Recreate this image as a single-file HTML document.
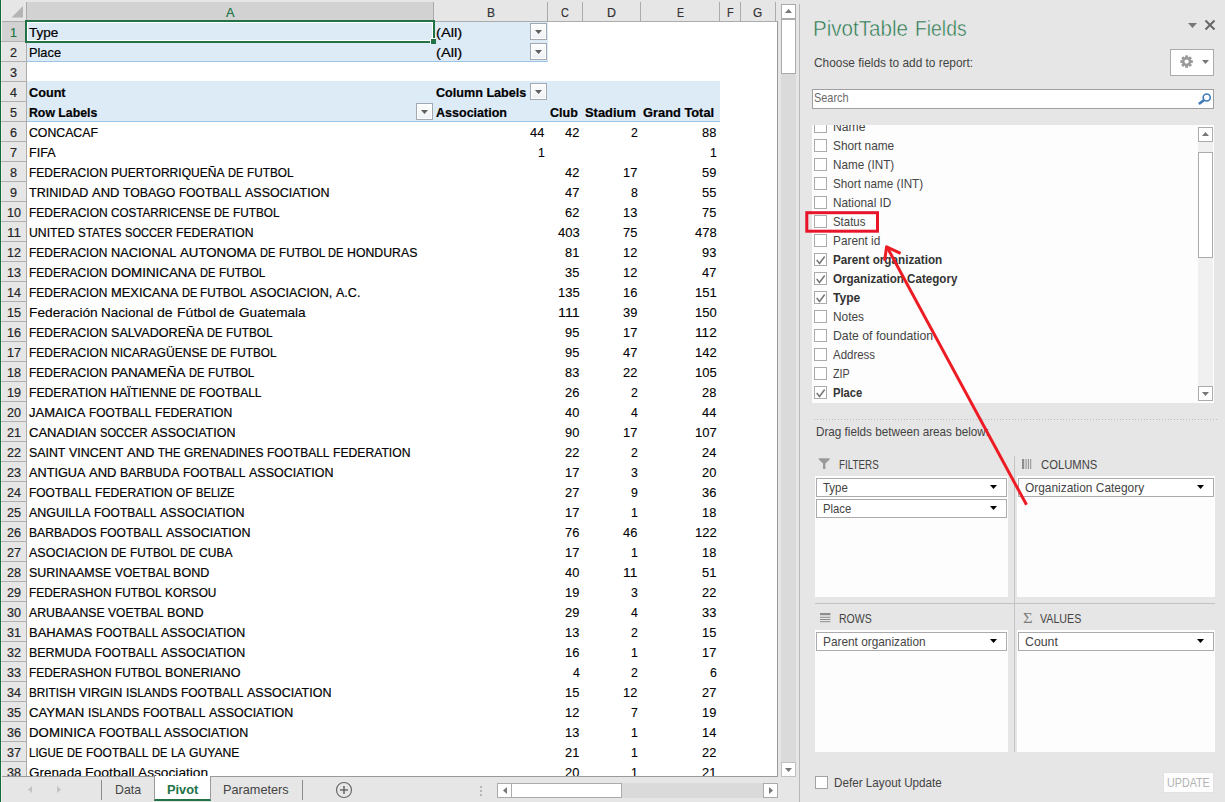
<!DOCTYPE html><html><head><meta charset="utf-8"><title>PivotTable Fields</title><style>
html,body{margin:0;padding:0}body{width:1226px;height:802px;overflow:hidden;position:relative;background:#e6e6e6;font-family:'Liberation Sans', sans-serif}
#root{position:absolute;left:0;top:0;width:1226px;height:802px;overflow:hidden}
#root div,#root svg,#root span{position:absolute;display:block}
.t{white-space:nowrap;transform-origin:0 0}
#sheet .t{-webkit-text-stroke:0.2px currentColor}
#sheet,#flist{overflow:hidden}
</style></head><body><div id="root">
<div style="left:0px;top:0px;width:1px;height:802px;background:#0f6c3b;"></div>
<div style="left:1px;top:0px;width:1px;height:802px;background:#f4eef0;"></div>
<div style="left:27px;top:2px;width:407px;height:19px;background:#d2d2d2;"></div>
<div style="left:26px;top:2px;width:1px;height:19px;background:#ababab;"></div>
<div style="left:433px;top:2px;width:1px;height:19px;background:#ababab;"></div>
<div style="left:547px;top:2px;width:1px;height:19px;background:#ababab;"></div>
<div style="left:582px;top:2px;width:1px;height:19px;background:#ababab;"></div>
<div style="left:640px;top:2px;width:1px;height:19px;background:#ababab;"></div>
<div style="left:719px;top:2px;width:1px;height:19px;background:#ababab;"></div>
<div style="left:740px;top:2px;width:1px;height:19px;background:#ababab;"></div>
<div style="left:775px;top:2px;width:1px;height:19px;background:#ababab;"></div>
<div style="left:2px;top:21px;width:776px;height:1px;background:#ababab;"></div>
<svg style="left:10px;top:5px" width="14" height="13" viewBox="0 0 14 13"><path d="M13 1V12.5H1.5Z" fill="#b4b4b4"/></svg>
<div style="left:2px;top:22px;width:24px;height:20px;background:#d2d2d2;"></div>
<div style="left:26px;top:22px;width:1px;height:754px;background:#ababab;"></div>
<div style="left:1px;top:41px;width:25px;height:1px;background:#b0b0b0;"></div>
<div style="left:1px;top:61px;width:25px;height:1px;background:#b0b0b0;"></div>
<div style="left:1px;top:81px;width:25px;height:1px;background:#b0b0b0;"></div>
<div style="left:1px;top:101px;width:25px;height:1px;background:#b0b0b0;"></div>
<div style="left:1px;top:121px;width:25px;height:1px;background:#b0b0b0;"></div>
<div style="left:1px;top:141px;width:25px;height:1px;background:#b0b0b0;"></div>
<div style="left:1px;top:161px;width:25px;height:1px;background:#b0b0b0;"></div>
<div style="left:1px;top:181px;width:25px;height:1px;background:#b0b0b0;"></div>
<div style="left:1px;top:201px;width:25px;height:1px;background:#b0b0b0;"></div>
<div style="left:1px;top:221px;width:25px;height:1px;background:#b0b0b0;"></div>
<div style="left:1px;top:241px;width:25px;height:1px;background:#b0b0b0;"></div>
<div style="left:1px;top:261px;width:25px;height:1px;background:#b0b0b0;"></div>
<div style="left:1px;top:281px;width:25px;height:1px;background:#b0b0b0;"></div>
<div style="left:1px;top:301px;width:25px;height:1px;background:#b0b0b0;"></div>
<div style="left:1px;top:321px;width:25px;height:1px;background:#b0b0b0;"></div>
<div style="left:1px;top:341px;width:25px;height:1px;background:#b0b0b0;"></div>
<div style="left:1px;top:361px;width:25px;height:1px;background:#b0b0b0;"></div>
<div style="left:1px;top:381px;width:25px;height:1px;background:#b0b0b0;"></div>
<div style="left:1px;top:401px;width:25px;height:1px;background:#b0b0b0;"></div>
<div style="left:1px;top:421px;width:25px;height:1px;background:#b0b0b0;"></div>
<div style="left:1px;top:441px;width:25px;height:1px;background:#b0b0b0;"></div>
<div style="left:1px;top:461px;width:25px;height:1px;background:#b0b0b0;"></div>
<div style="left:1px;top:481px;width:25px;height:1px;background:#b0b0b0;"></div>
<div style="left:1px;top:501px;width:25px;height:1px;background:#b0b0b0;"></div>
<div style="left:1px;top:521px;width:25px;height:1px;background:#b0b0b0;"></div>
<div style="left:1px;top:541px;width:25px;height:1px;background:#b0b0b0;"></div>
<div style="left:1px;top:561px;width:25px;height:1px;background:#b0b0b0;"></div>
<div style="left:1px;top:581px;width:25px;height:1px;background:#b0b0b0;"></div>
<div style="left:1px;top:601px;width:25px;height:1px;background:#b0b0b0;"></div>
<div style="left:1px;top:621px;width:25px;height:1px;background:#b0b0b0;"></div>
<div style="left:1px;top:641px;width:25px;height:1px;background:#b0b0b0;"></div>
<div style="left:1px;top:661px;width:25px;height:1px;background:#b0b0b0;"></div>
<div style="left:1px;top:681px;width:25px;height:1px;background:#b0b0b0;"></div>
<div style="left:1px;top:701px;width:25px;height:1px;background:#b0b0b0;"></div>
<div style="left:1px;top:721px;width:25px;height:1px;background:#b0b0b0;"></div>
<div style="left:1px;top:741px;width:25px;height:1px;background:#b0b0b0;"></div>
<div style="left:1px;top:761px;width:25px;height:1px;background:#b0b0b0;"></div>
<div style="left:27px;top:22px;width:750px;height:754px;background:#fff;"></div>
<div style="left:27px;top:22px;width:521px;height:39px;background:#ddebf7;"></div>
<div style="left:27px;top:61px;width:521px;height:1px;background:#9dc3e6;"></div>
<div style="left:27px;top:81px;width:693px;height:40px;background:#ddebf7;"></div>
<div style="left:27px;top:121px;width:693px;height:1px;background:#9dc3e6;"></div>
<div style="left:777px;top:21px;width:1px;height:756px;background:#9a9a9a;"></div>
<div style="left:2px;top:776px;width:776px;height:1px;background:#9a9a9a;"></div>
<div style="left:530px;top:23px;width:17px;height:17px;box-sizing:border-box;border:1px solid #a2a9b3;background:linear-gradient(#fdfdfd,#eef1f5);box-shadow:inset 0 0 0 1px #fff"></div><svg style="left:535px;top:30px" width="7" height="4" viewBox="0 0 7 4"><path d="M0 0H7L3.5 4Z" fill="#5e5e5e"/></svg>
<div style="left:530px;top:43px;width:17px;height:17px;box-sizing:border-box;border:1px solid #a2a9b3;background:linear-gradient(#fdfdfd,#eef1f5);box-shadow:inset 0 0 0 1px #fff"></div><svg style="left:535px;top:50px" width="7" height="4" viewBox="0 0 7 4"><path d="M0 0H7L3.5 4Z" fill="#5e5e5e"/></svg>
<div style="left:530px;top:83px;width:17px;height:17px;box-sizing:border-box;border:1px solid #a2a9b3;background:linear-gradient(#fdfdfd,#eef1f5);box-shadow:inset 0 0 0 1px #fff"></div><svg style="left:535px;top:90px" width="7" height="4" viewBox="0 0 7 4"><path d="M0 0H7L3.5 4Z" fill="#5e5e5e"/></svg>
<div style="left:416px;top:103px;width:17px;height:17px;box-sizing:border-box;border:1px solid #a2a9b3;background:linear-gradient(#fdfdfd,#eef1f5);box-shadow:inset 0 0 0 1px #fff"></div><svg style="left:421px;top:110px" width="7" height="4" viewBox="0 0 7 4"><path d="M0 0H7L3.5 4Z" fill="#5e5e5e"/></svg>
<div style="left:25px;top:20px;width:410px;height:23px;box-sizing:border-box;border:2px solid #217346;"></div>
<div style="left:27px;top:22px;width:406px;height:19px;box-sizing:border-box;border:1px solid #fff;"></div>
<div style="left:430px;top:38px;width:6px;height:6px;background:#fff;"></div>
<div style="left:431px;top:39px;width:5px;height:5px;background:#217346;"></div>
<div style="left:781px;top:4px;width:15px;height:773px;background:#dadada;"></div>
<div style="left:781px;top:4px;width:15px;height:15px;background:#fff;border:1px solid #ababab;box-sizing:border-box;"></div>
<svg style="left:785px;top:9px" width="7" height="4" viewBox="0 0 7 4"><path d="M0 4H7L3.5 0Z" fill="#777"/></svg>
<div style="left:781px;top:19px;width:15px;height:55px;background:#fff;border:1px solid #ababab;box-sizing:border-box;"></div>
<div style="left:781px;top:762px;width:15px;height:15px;background:#fff;border:1px solid #c0c0c0;box-sizing:border-box;"></div>
<svg style="left:785px;top:768px" width="7" height="4" viewBox="0 0 7 4"><path d="M0 0H7L3.5 4Z" fill="#777"/></svg>
<svg style="left:28px;top:786px" width="4" height="7" viewBox="0 0 4 7"><path d="M4 0V7L0 3.5Z" fill="#c3c3c3"/></svg>
<svg style="left:57px;top:786px" width="4" height="7" viewBox="0 0 4 7"><path d="M0 0V7L4 3.5Z" fill="#c3c3c3"/></svg>
<div style="left:101px;top:780px;width:1px;height:20px;background:#8c8c8c;"></div>
<div style="left:302px;top:780px;width:1px;height:20px;background:#8c8c8c;"></div>
<div style="left:154px;top:776px;width:57px;height:25px;box-sizing:border-box;background:#fff;border-left:1px solid #9a9a9a;border-right:1px solid #9a9a9a;border-bottom:2px solid #217346;"></div>
<svg style="left:335px;top:781px" width="18" height="18" viewBox="0 0 18 18"><circle cx="9" cy="9" r="7.5" fill="none" stroke="#6a6a6a" stroke-width="1.2"/><path d="M5 9H13M9 5V13" stroke="#6a6a6a" stroke-width="1.6"/></svg>
<div style="left:480px;top:786px;width:2px;height:2px;background:#b5b5b5;"></div>
<div style="left:480px;top:790px;width:2px;height:2px;background:#b5b5b5;"></div>
<div style="left:480px;top:794px;width:2px;height:2px;background:#b5b5b5;"></div>
<div style="left:497px;top:783px;width:281px;height:15px;background:#dadada;"></div>
<div style="left:497px;top:783px;width:15px;height:15px;background:#fff;border:1px solid #ababab;box-sizing:border-box;"></div>
<svg style="left:502.5px;top:787px" width="4" height="7" viewBox="0 0 4 7"><path d="M4 0V7L0 3.5Z" fill="#777"/></svg>
<div style="left:511px;top:783px;width:111px;height:15px;background:#fff;border:1px solid #ababab;box-sizing:border-box;"></div>
<div style="left:763px;top:783px;width:15px;height:15px;background:#fff;border:1px solid #ababab;box-sizing:border-box;"></div>
<svg style="left:769px;top:787px" width="4" height="7" viewBox="0 0 4 7"><path d="M0 0V7L4 3.5Z" fill="#777"/></svg>
<div style="left:799px;top:4px;width:1px;height:798px;background:#b9b9b9;"></div>
<div style="left:1225px;top:0px;width:1px;height:802px;background:#fff;"></div>
<svg style="left:1188px;top:23px" width="9" height="5" viewBox="0 0 9 5"><path d="M0 0H9L4.5 5Z" fill="#777"/></svg>
<svg style="left:1204px;top:19px" width="12" height="12" viewBox="0 0 12 12"><path d="M1.5 1.5L10.5 10.5M10.5 1.5L1.5 10.5" stroke="#666" stroke-width="2"/></svg>
<div style="left:1170px;top:49px;width:44px;height:27px;background:#fff;border:1px solid #ababab;box-sizing:border-box;"></div>
<svg style="left:1179.8px;top:55.1px" width="13.2" height="13.2" viewBox="-7 -7 14 14"><g fill="#9a9a9a"><rect x="-1.5" y="-6.6" width="3" height="3.2" transform="rotate(0)"/><rect x="-1.5" y="-6.6" width="3" height="3.2" transform="rotate(45)"/><rect x="-1.5" y="-6.6" width="3" height="3.2" transform="rotate(90)"/><rect x="-1.5" y="-6.6" width="3" height="3.2" transform="rotate(135)"/><rect x="-1.5" y="-6.6" width="3" height="3.2" transform="rotate(180)"/><rect x="-1.5" y="-6.6" width="3" height="3.2" transform="rotate(225)"/><rect x="-1.5" y="-6.6" width="3" height="3.2" transform="rotate(270)"/><rect x="-1.5" y="-6.6" width="3" height="3.2" transform="rotate(315)"/></g><circle r="3.6" fill="none" stroke="#9a9a9a" stroke-width="2.6"/></svg>
<svg style="left:1202px;top:60px" width="7" height="4" viewBox="0 0 7 4"><path d="M0 0H7L3.5 4Z" fill="#777"/></svg>
<div style="left:812px;top:89px;width:402px;height:20px;background:#fff;border:1px solid #a0a0a0;box-sizing:border-box;"></div>
<svg style="left:1196px;top:91px" width="17" height="16" viewBox="0 0 17 16"><circle cx="10.7" cy="6.5" r="3.55" fill="none" stroke="#3d7ab8" stroke-width="1.6"/><path d="M8.1 9L2.9 13.1" stroke="#3d7ab8" stroke-width="2.6" stroke-linecap="butt"/></svg>
<div style="left:812px;top:125px;width:402px;height:278px;background:#fdfdfd;"></div>
<div style="left:1198px;top:127px;width:15px;height:274px;background:#f0f0f0;"></div>
<div style="left:1198px;top:127px;width:15px;height:15px;background:#fff;border:1px solid #ababab;box-sizing:border-box;"></div>
<svg style="left:1202px;top:132px" width="7" height="4" viewBox="0 0 7 4"><path d="M0 4H7L3.5 0Z" fill="#777"/></svg>
<div style="left:1198px;top:152px;width:15px;height:106px;background:#fff;border:1px solid #ababab;box-sizing:border-box;"></div>
<div style="left:1198px;top:386px;width:15px;height:15px;background:#fff;border:1px solid #ababab;box-sizing:border-box;"></div>
<svg style="left:1202px;top:392px" width="7" height="4" viewBox="0 0 7 4"><path d="M0 0H7L3.5 4Z" fill="#777"/></svg>
<div style="left:814px;top:419px;width:404px;height:1px;background:repeating-linear-gradient(90deg,#bdbdbd 0 1px,transparent 1px 3px)"></div>
<svg style="left:818px;top:458px" width="13" height="12" viewBox="0 0 13 12"><path d="M0.8 0.2H11.6V1.6L7.4 5.6V11H5V5.6L0.8 1.6Z" fill="#9a9a9a"/></svg>
<svg style="left:1022px;top:459px" width="10" height="10" viewBox="0 0 10 10"><rect x="0" y="0" width="2.2" height="10" fill="#8d8d8d"/><rect x="3.6" y="0" width="1" height="10" fill="#8d8d8d"/><rect x="5.9" y="0" width="1" height="10" fill="#8d8d8d"/><rect x="8.2" y="0" width="1" height="10" fill="#8d8d8d"/></svg>
<svg style="left:820px;top:613px" width="11" height="10" viewBox="0 0 11 10"><rect x="0" y="0" width="10.4" height="2.2" fill="#8d8d8d"/><rect x="0" y="3.8" width="10.4" height="1" fill="#8d8d8d"/><rect x="0" y="6" width="10.4" height="1" fill="#8d8d8d"/><rect x="0" y="8.2" width="10.4" height="1" fill="#8d8d8d"/></svg>
<div style="left:815px;top:476px;width:193px;height:121px;background:#fdfdfd;"></div>
<div style="left:1017px;top:476px;width:198px;height:121px;background:#fdfdfd;"></div>
<div style="left:815px;top:630px;width:193px;height:122px;background:#fdfdfd;"></div>
<div style="left:1017px;top:630px;width:198px;height:122px;background:#fdfdfd;"></div>
<div style="left:1014px;top:456px;width:1px;height:296px;background:#c3c3c3;"></div>
<div style="left:815px;top:603px;width:400px;height:1px;background:#c3c3c3;"></div>
<div style="left:816px;top:478px;width:191px;height:19px;background:#fff;border:1px solid #ababab;box-sizing:border-box;"></div><svg style="left:990px;top:485px" width="7" height="4" viewBox="0 0 7 4"><path d="M0 0H7L3.5 4Z" fill="#000"/></svg>
<div style="left:816px;top:499px;width:191px;height:19px;background:#fff;border:1px solid #ababab;box-sizing:border-box;"></div><svg style="left:990px;top:506px" width="7" height="4" viewBox="0 0 7 4"><path d="M0 0H7L3.5 4Z" fill="#000"/></svg>
<div style="left:1018px;top:478px;width:196px;height:19px;background:#fff;border:1px solid #ababab;box-sizing:border-box;"></div><svg style="left:1197px;top:485px" width="7" height="4" viewBox="0 0 7 4"><path d="M0 0H7L3.5 4Z" fill="#000"/></svg>
<div style="left:816px;top:632px;width:191px;height:19px;background:#fff;border:1px solid #ababab;box-sizing:border-box;"></div><svg style="left:990px;top:639px" width="7" height="4" viewBox="0 0 7 4"><path d="M0 0H7L3.5 4Z" fill="#000"/></svg>
<div style="left:1018px;top:632px;width:196px;height:19px;background:#fff;border:1px solid #ababab;box-sizing:border-box;"></div><svg style="left:1197px;top:639px" width="7" height="4" viewBox="0 0 7 4"><path d="M0 0H7L3.5 4Z" fill="#000"/></svg>
<div style="left:815px;top:776px;width:13px;height:13px;background:#fff;border:1px solid #a3a3a3;box-sizing:border-box;"></div>
<div style="left:1163px;top:772px;width:51px;height:21px;background:#fdfdfd;border:1px solid #e2e2e2;box-sizing:border-box;"></div>
<div id="sheet" style="left:0;top:0;width:778px;height:776px">
<span class="t" style="left:10.00px;top:23px;height:20px;line-height:20px;font-size:13px;color:#217346;transform:scaleX(0.9676);">1</span>
<span class="t" style="left:10.00px;top:43px;height:20px;line-height:20px;font-size:13px;color:#262626;transform:scaleX(0.9676);">2</span>
<span class="t" style="left:10.00px;top:63px;height:20px;line-height:20px;font-size:13px;color:#262626;transform:scaleX(0.9676);">3</span>
<span class="t" style="left:10.00px;top:83px;height:20px;line-height:20px;font-size:13px;color:#262626;transform:scaleX(0.9676);">4</span>
<span class="t" style="left:10.00px;top:103px;height:20px;line-height:20px;font-size:13px;color:#262626;transform:scaleX(0.9676);">5</span>
<span class="t" style="left:10.00px;top:123px;height:20px;line-height:20px;font-size:13px;color:#262626;transform:scaleX(0.9676);">6</span>
<span class="t" style="left:10.00px;top:143px;height:20px;line-height:20px;font-size:13px;color:#262626;transform:scaleX(0.9676);">7</span>
<span class="t" style="left:10.00px;top:163px;height:20px;line-height:20px;font-size:13px;color:#262626;transform:scaleX(0.9676);">8</span>
<span class="t" style="left:10.00px;top:183px;height:20px;line-height:20px;font-size:13px;color:#262626;transform:scaleX(0.9676);">9</span>
<span class="t" style="left:6.50px;top:203px;height:20px;line-height:20px;font-size:13px;color:#262626;transform:scaleX(0.9676);">10</span>
<span class="t" style="left:6.50px;top:223px;height:20px;line-height:20px;font-size:13px;color:#262626;transform:scaleX(1.0370);">11</span>
<span class="t" style="left:6.50px;top:243px;height:20px;line-height:20px;font-size:13px;color:#262626;transform:scaleX(0.9676);">12</span>
<span class="t" style="left:6.50px;top:263px;height:20px;line-height:20px;font-size:13px;color:#262626;transform:scaleX(0.9676);">13</span>
<span class="t" style="left:6.50px;top:283px;height:20px;line-height:20px;font-size:13px;color:#262626;transform:scaleX(0.9676);">14</span>
<span class="t" style="left:6.50px;top:303px;height:20px;line-height:20px;font-size:13px;color:#262626;transform:scaleX(0.9676);">15</span>
<span class="t" style="left:6.50px;top:323px;height:20px;line-height:20px;font-size:13px;color:#262626;transform:scaleX(0.9676);">16</span>
<span class="t" style="left:6.50px;top:343px;height:20px;line-height:20px;font-size:13px;color:#262626;transform:scaleX(0.9676);">17</span>
<span class="t" style="left:6.50px;top:363px;height:20px;line-height:20px;font-size:13px;color:#262626;transform:scaleX(0.9676);">18</span>
<span class="t" style="left:6.50px;top:383px;height:20px;line-height:20px;font-size:13px;color:#262626;transform:scaleX(0.9676);">19</span>
<span class="t" style="left:6.50px;top:403px;height:20px;line-height:20px;font-size:13px;color:#262626;transform:scaleX(0.9676);">20</span>
<span class="t" style="left:6.50px;top:423px;height:20px;line-height:20px;font-size:13px;color:#262626;transform:scaleX(0.9676);">21</span>
<span class="t" style="left:6.50px;top:443px;height:20px;line-height:20px;font-size:13px;color:#262626;transform:scaleX(0.9676);">22</span>
<span class="t" style="left:6.50px;top:463px;height:20px;line-height:20px;font-size:13px;color:#262626;transform:scaleX(0.9676);">23</span>
<span class="t" style="left:6.50px;top:483px;height:20px;line-height:20px;font-size:13px;color:#262626;transform:scaleX(0.9676);">24</span>
<span class="t" style="left:6.50px;top:503px;height:20px;line-height:20px;font-size:13px;color:#262626;transform:scaleX(0.9676);">25</span>
<span class="t" style="left:6.50px;top:523px;height:20px;line-height:20px;font-size:13px;color:#262626;transform:scaleX(0.9676);">26</span>
<span class="t" style="left:6.50px;top:543px;height:20px;line-height:20px;font-size:13px;color:#262626;transform:scaleX(0.9676);">27</span>
<span class="t" style="left:6.50px;top:563px;height:20px;line-height:20px;font-size:13px;color:#262626;transform:scaleX(0.9676);">28</span>
<span class="t" style="left:6.50px;top:583px;height:20px;line-height:20px;font-size:13px;color:#262626;transform:scaleX(0.9676);">29</span>
<span class="t" style="left:6.50px;top:603px;height:20px;line-height:20px;font-size:13px;color:#262626;transform:scaleX(0.9676);">30</span>
<span class="t" style="left:6.50px;top:623px;height:20px;line-height:20px;font-size:13px;color:#262626;transform:scaleX(0.9676);">31</span>
<span class="t" style="left:6.50px;top:643px;height:20px;line-height:20px;font-size:13px;color:#262626;transform:scaleX(0.9676);">32</span>
<span class="t" style="left:6.50px;top:663px;height:20px;line-height:20px;font-size:13px;color:#262626;transform:scaleX(0.9676);">33</span>
<span class="t" style="left:6.50px;top:683px;height:20px;line-height:20px;font-size:13px;color:#262626;transform:scaleX(0.9676);">34</span>
<span class="t" style="left:6.50px;top:703px;height:20px;line-height:20px;font-size:13px;color:#262626;transform:scaleX(0.9676);">35</span>
<span class="t" style="left:6.50px;top:723px;height:20px;line-height:20px;font-size:13px;color:#262626;transform:scaleX(0.9676);">36</span>
<span class="t" style="left:6.50px;top:743px;height:20px;line-height:20px;font-size:13px;color:#262626;transform:scaleX(0.9676);">37</span>
<span class="t" style="left:6.50px;top:763px;height:20px;line-height:20px;font-size:13px;color:#262626;transform:scaleX(0.9676);">38</span>
<span class="t" style="left:225.75px;top:3px;height:19px;line-height:19px;font-size:13px;color:#217346;transform:scaleX(0.9802);">A</span>
<span class="t" style="left:487.00px;top:3px;height:19px;line-height:19px;font-size:13px;color:#333;transform:scaleX(0.9225);">B</span>
<span class="t" style="left:561.10px;top:3px;height:19px;line-height:19px;font-size:13px;color:#333;transform:scaleX(0.8306);">C</span>
<span class="t" style="left:606.50px;top:3px;height:19px;line-height:19px;font-size:13px;color:#333;transform:scaleX(0.9584);">D</span>
<span class="t" style="left:676.50px;top:3px;height:19px;line-height:19px;font-size:13px;color:#333;transform:scaleX(0.8072);">E</span>
<span class="t" style="left:726.65px;top:3px;height:19px;line-height:19px;font-size:13px;color:#333;transform:scaleX(0.8424);">F</span>
<span class="t" style="left:753.40px;top:3px;height:19px;line-height:19px;font-size:13px;color:#333;transform:scaleX(0.9086);">G</span>
<span class="t" style="left:29.30px;top:23px;height:20px;line-height:20px;font-size:13px;color:#000;transform:scaleX(1.0430);">Type</span>
<span class="t" style="left:29.30px;top:43px;height:20px;line-height:20px;font-size:13px;color:#000;transform:scaleX(0.9837);">Place</span>
<span class="t" style="left:435.70px;top:23px;height:20px;line-height:20px;font-size:13px;color:#000;transform:scaleX(1.1381);">(All)</span>
<span class="t" style="left:435.70px;top:43px;height:20px;line-height:20px;font-size:13px;color:#000;transform:scaleX(1.1381);">(All)</span>
<span class="t" style="left:29.30px;top:83px;height:20px;line-height:20px;font-size:13px;color:#000;font-weight:bold;transform:scaleX(0.9748);">Count</span>
<span class="t" style="left:29.30px;top:103px;height:20px;line-height:20px;font-size:13px;color:#000;font-weight:bold;transform:scaleX(0.9453);">Row Labels</span>
<span class="t" style="left:435.70px;top:83px;height:20px;line-height:20px;font-size:13px;color:#000;font-weight:bold;transform:scaleX(0.9690);">Column Labels</span>
<span class="t" style="left:435.70px;top:103px;height:20px;line-height:20px;font-size:13px;color:#000;font-weight:bold;transform:scaleX(0.9635);">Association</span>
<span class="t" style="left:550.00px;top:103px;height:20px;line-height:20px;font-size:13px;color:#000;font-weight:bold;transform:scaleX(0.9622);">Club</span>
<span class="t" style="left:584.60px;top:103px;height:20px;line-height:20px;font-size:13px;color:#000;font-weight:bold;transform:scaleX(0.9923);">Stadium</span>
<span class="t" style="left:643.40px;top:103px;height:20px;line-height:20px;font-size:13px;color:#000;font-weight:bold;transform:scaleX(0.9877);">Grand Total</span>
<span class="r" style="left:0;top:0"><span class="t" style="left:28.70px;top:123px;height:20px;line-height:20px;font-size:13px;color:#000;transform:scaleX(0.9451);">CONCACAF</span></span>
<span class="t" style="left:530.40px;top:123px;height:20px;line-height:20px;font-size:13px;color:#000;transform:scaleX(0.9883);-webkit-text-stroke:0.1px currentColor;">44</span>
<span class="t" style="left:565.40px;top:123px;height:20px;line-height:20px;font-size:13px;color:#000;transform:scaleX(0.9883);-webkit-text-stroke:0.1px currentColor;">42</span>
<span class="t" style="left:630.85px;top:123px;height:20px;line-height:20px;font-size:13px;color:#000;transform:scaleX(0.9469);-webkit-text-stroke:0.1px currentColor;">2</span>
<span class="t" style="left:702.40px;top:123px;height:20px;line-height:20px;font-size:13px;color:#000;transform:scaleX(0.9883);-webkit-text-stroke:0.1px currentColor;">88</span>
<span class="r" style="left:0;top:0"><span class="t" style="left:28.70px;top:143px;height:20px;line-height:20px;font-size:13px;color:#000;transform:scaleX(0.9671);">FIFA</span></span>
<span class="t" style="left:537.85px;top:143px;height:20px;line-height:20px;font-size:13px;color:#000;transform:scaleX(0.9469);-webkit-text-stroke:0.1px currentColor;">1</span>
<span class="t" style="left:709.85px;top:143px;height:20px;line-height:20px;font-size:13px;color:#000;transform:scaleX(0.9469);-webkit-text-stroke:0.1px currentColor;">1</span>
<span class="r" style="left:0;top:0"><span class="t" style="left:28.70px;top:163px;height:20px;line-height:20px;font-size:13px;color:#000;transform:scaleX(0.9216);">FEDERACION</span> <span class="t" style="left:110.85px;top:163px;height:20px;line-height:20px;font-size:13px;color:#000;transform:scaleX(0.9288);">PUERTORRIQUEÑA</span> <span class="t" style="left:228.08px;top:163px;height:20px;line-height:20px;font-size:13px;color:#000;transform:scaleX(0.8543);">DE</span> <span class="t" style="left:247.11px;top:163px;height:20px;line-height:20px;font-size:13px;color:#000;transform:scaleX(0.9063);">FUTBOL</span></span>
<span class="t" style="left:565.40px;top:163px;height:20px;line-height:20px;font-size:13px;color:#000;transform:scaleX(0.9883);-webkit-text-stroke:0.1px currentColor;">42</span>
<span class="t" style="left:623.40px;top:163px;height:20px;line-height:20px;font-size:13px;color:#000;transform:scaleX(0.9883);-webkit-text-stroke:0.1px currentColor;">17</span>
<span class="t" style="left:702.40px;top:163px;height:20px;line-height:20px;font-size:13px;color:#000;transform:scaleX(0.9883);-webkit-text-stroke:0.1px currentColor;">59</span>
<span class="r" style="left:0;top:0"><span class="t" style="left:28.70px;top:183px;height:20px;line-height:20px;font-size:13px;color:#000;transform:scaleX(0.9681);">TRINIDAD</span> <span class="t" style="left:91.73px;top:183px;height:20px;line-height:20px;font-size:13px;color:#000;transform:scaleX(0.9986);">AND</span> <span class="t" style="left:122.75px;top:183px;height:20px;line-height:20px;font-size:13px;color:#000;transform:scaleX(0.9465);">TOBAGO</span> <span class="t" style="left:178.77px;top:183px;height:20px;line-height:20px;font-size:13px;color:#000;transform:scaleX(0.9192);">FOOTBALL</span> <span class="t" style="left:244.81px;top:183px;height:20px;line-height:20px;font-size:13px;color:#000;transform:scaleX(0.9608);">ASSOCIATION</span></span>
<span class="t" style="left:565.40px;top:183px;height:20px;line-height:20px;font-size:13px;color:#000;transform:scaleX(0.9883);-webkit-text-stroke:0.1px currentColor;">47</span>
<span class="t" style="left:630.85px;top:183px;height:20px;line-height:20px;font-size:13px;color:#000;transform:scaleX(0.9469);-webkit-text-stroke:0.1px currentColor;">8</span>
<span class="t" style="left:702.40px;top:183px;height:20px;line-height:20px;font-size:13px;color:#000;transform:scaleX(0.9883);-webkit-text-stroke:0.1px currentColor;">55</span>
<span class="r" style="left:0;top:0"><span class="t" style="left:28.70px;top:203px;height:20px;line-height:20px;font-size:13px;color:#000;transform:scaleX(0.9224);">FEDERACION</span> <span class="t" style="left:110.93px;top:203px;height:20px;line-height:20px;font-size:13px;color:#000;transform:scaleX(0.8980);">COSTARRICENSE</span> <span class="t" style="left:214.22px;top:203px;height:20px;line-height:20px;font-size:13px;color:#000;transform:scaleX(0.8551);">DE</span> <span class="t" style="left:233.27px;top:203px;height:20px;line-height:20px;font-size:13px;color:#000;transform:scaleX(0.9071);">FUTBOL</span></span>
<span class="t" style="left:565.40px;top:203px;height:20px;line-height:20px;font-size:13px;color:#000;transform:scaleX(0.9883);-webkit-text-stroke:0.1px currentColor;">62</span>
<span class="t" style="left:623.40px;top:203px;height:20px;line-height:20px;font-size:13px;color:#000;transform:scaleX(0.9883);-webkit-text-stroke:0.1px currentColor;">13</span>
<span class="t" style="left:702.40px;top:203px;height:20px;line-height:20px;font-size:13px;color:#000;transform:scaleX(0.9883);-webkit-text-stroke:0.1px currentColor;">75</span>
<span class="r" style="left:0;top:0"><span class="t" style="left:28.70px;top:223px;height:20px;line-height:20px;font-size:13px;color:#000;transform:scaleX(0.9395);">UNITED</span> <span class="t" style="left:77.77px;top:223px;height:20px;line-height:20px;font-size:13px;color:#000;transform:scaleX(0.8935);">STATES</span> <span class="t" style="left:124.83px;top:223px;height:20px;line-height:20px;font-size:13px;color:#000;transform:scaleX(0.8533);">SOCCER</span> <span class="t" style="left:175.90px;top:223px;height:20px;line-height:20px;font-size:13px;color:#000;transform:scaleX(0.9357);">FEDERATION</span></span>
<span class="t" style="left:557.95px;top:223px;height:20px;line-height:20px;font-size:13px;color:#000;transform:scaleX(1.0022);-webkit-text-stroke:0.1px currentColor;">403</span>
<span class="t" style="left:623.40px;top:223px;height:20px;line-height:20px;font-size:13px;color:#000;transform:scaleX(0.9883);-webkit-text-stroke:0.1px currentColor;">75</span>
<span class="t" style="left:694.95px;top:223px;height:20px;line-height:20px;font-size:13px;color:#000;transform:scaleX(1.0022);-webkit-text-stroke:0.1px currentColor;">478</span>
<span class="r" style="left:0;top:0"><span class="t" style="left:28.70px;top:243px;height:20px;line-height:20px;font-size:13px;color:#000;transform:scaleX(0.9191);">FEDERACION</span> <span class="t" style="left:110.64px;top:243px;height:20px;line-height:20px;font-size:13px;color:#000;transform:scaleX(0.9832);">NACIONAL</span> <span class="t" style="left:179.58px;top:243px;height:20px;line-height:20px;font-size:13px;color:#000;transform:scaleX(1.0194);">AUTONOMA</span> <span class="t" style="left:259.52px;top:243px;height:20px;line-height:20px;font-size:13px;color:#000;transform:scaleX(0.8519);">DE</span> <span class="t" style="left:278.51px;top:243px;height:20px;line-height:20px;font-size:13px;color:#000;transform:scaleX(0.9038);">FUTBOL</span> <span class="t" style="left:328.47px;top:243px;height:20px;line-height:20px;font-size:13px;color:#000;transform:scaleX(0.8519);">DE</span> <span class="t" style="left:347.45px;top:243px;height:20px;line-height:20px;font-size:13px;color:#000;transform:scaleX(0.9454);">HONDURAS</span></span>
<span class="t" style="left:565.40px;top:243px;height:20px;line-height:20px;font-size:13px;color:#000;transform:scaleX(0.9883);-webkit-text-stroke:0.1px currentColor;">81</span>
<span class="t" style="left:623.40px;top:243px;height:20px;line-height:20px;font-size:13px;color:#000;transform:scaleX(0.9883);-webkit-text-stroke:0.1px currentColor;">12</span>
<span class="t" style="left:702.40px;top:243px;height:20px;line-height:20px;font-size:13px;color:#000;transform:scaleX(0.9883);-webkit-text-stroke:0.1px currentColor;">93</span>
<span class="r" style="left:0;top:0"><span class="t" style="left:28.70px;top:263px;height:20px;line-height:20px;font-size:13px;color:#000;transform:scaleX(0.9204);">FEDERACION</span> <span class="t" style="left:110.75px;top:263px;height:20px;line-height:20px;font-size:13px;color:#000;transform:scaleX(1.0288);">DOMINICANA</span> <span class="t" style="left:199.81px;top:263px;height:20px;line-height:20px;font-size:13px;color:#000;transform:scaleX(0.8532);">DE</span> <span class="t" style="left:218.82px;top:263px;height:20px;line-height:20px;font-size:13px;color:#000;transform:scaleX(0.9051);">FUTBOL</span></span>
<span class="t" style="left:565.40px;top:263px;height:20px;line-height:20px;font-size:13px;color:#000;transform:scaleX(0.9883);-webkit-text-stroke:0.1px currentColor;">35</span>
<span class="t" style="left:623.40px;top:263px;height:20px;line-height:20px;font-size:13px;color:#000;transform:scaleX(0.9883);-webkit-text-stroke:0.1px currentColor;">12</span>
<span class="t" style="left:702.40px;top:263px;height:20px;line-height:20px;font-size:13px;color:#000;transform:scaleX(0.9883);-webkit-text-stroke:0.1px currentColor;">47</span>
<span class="r" style="left:0;top:0"><span class="t" style="left:28.70px;top:283px;height:20px;line-height:20px;font-size:13px;color:#000;transform:scaleX(0.9187);">FEDERACION</span> <span class="t" style="left:110.60px;top:283px;height:20px;line-height:20px;font-size:13px;color:#000;transform:scaleX(0.9913);">MEXICANA</span> <span class="t" style="left:181.52px;top:283px;height:20px;line-height:20px;font-size:13px;color:#000;transform:scaleX(0.8515);">DE</span> <span class="t" style="left:200.49px;top:283px;height:20px;line-height:20px;font-size:13px;color:#000;transform:scaleX(0.9034);">FUTBOL</span> <span class="t" style="left:250.43px;top:283px;height:20px;line-height:20px;font-size:13px;color:#000;transform:scaleX(0.9654);">ASOCIACION,</span> <span class="t" style="left:336.33px;top:283px;height:20px;line-height:20px;font-size:13px;color:#000;transform:scaleX(0.9634);">A.C.</span></span>
<span class="t" style="left:557.95px;top:283px;height:20px;line-height:20px;font-size:13px;color:#000;transform:scaleX(1.0022);-webkit-text-stroke:0.1px currentColor;">135</span>
<span class="t" style="left:623.40px;top:283px;height:20px;line-height:20px;font-size:13px;color:#000;transform:scaleX(0.9883);-webkit-text-stroke:0.1px currentColor;">16</span>
<span class="t" style="left:694.95px;top:283px;height:20px;line-height:20px;font-size:13px;color:#000;transform:scaleX(1.0022);-webkit-text-stroke:0.1px currentColor;">151</span>
<span class="r" style="left:0;top:0"><span class="t" style="left:28.70px;top:303px;height:20px;line-height:20px;font-size:13px;color:#000;transform:scaleX(1.0569);-webkit-text-stroke:0.1px currentColor;">Federación</span> <span class="t" style="left:101.11px;top:303px;height:20px;line-height:20px;font-size:13px;color:#000;transform:scaleX(1.0363);-webkit-text-stroke:0.1px currentColor;">Nacional</span> <span class="t" style="left:157.20px;top:303px;height:20px;line-height:20px;font-size:13px;color:#000;transform:scaleX(1.0863);-webkit-text-stroke:0.1px currentColor;">de</span> <span class="t" style="left:176.58px;top:303px;height:20px;line-height:20px;font-size:13px;color:#000;transform:scaleX(1.0839);-webkit-text-stroke:0.1px currentColor;">Fútbol</span> <span class="t" style="left:219.41px;top:303px;height:20px;line-height:20px;font-size:13px;color:#000;transform:scaleX(1.0863);-webkit-text-stroke:0.1px currentColor;">de</span> <span class="t" style="left:238.79px;top:303px;height:20px;line-height:20px;font-size:13px;color:#000;transform:scaleX(1.0490);-webkit-text-stroke:0.1px currentColor;">Guatemala</span></span>
<span class="t" style="left:557.95px;top:303px;height:20px;line-height:20px;font-size:13px;color:#000;transform:scaleX(1.1004);-webkit-text-stroke:0.1px currentColor;">111</span>
<span class="t" style="left:623.40px;top:303px;height:20px;line-height:20px;font-size:13px;color:#000;transform:scaleX(0.9883);-webkit-text-stroke:0.1px currentColor;">39</span>
<span class="t" style="left:694.95px;top:303px;height:20px;line-height:20px;font-size:13px;color:#000;transform:scaleX(1.0022);-webkit-text-stroke:0.1px currentColor;">150</span>
<span class="r" style="left:0;top:0"><span class="t" style="left:28.70px;top:323px;height:20px;line-height:20px;font-size:13px;color:#000;transform:scaleX(0.9213);">FEDERACION</span> <span class="t" style="left:110.83px;top:323px;height:20px;line-height:20px;font-size:13px;color:#000;transform:scaleX(0.9680);">SALVADOREÑA</span> <span class="t" style="left:206.99px;top:323px;height:20px;line-height:20px;font-size:13px;color:#000;transform:scaleX(0.8540);">DE</span> <span class="t" style="left:226.02px;top:323px;height:20px;line-height:20px;font-size:13px;color:#000;transform:scaleX(0.9060);">FUTBOL</span></span>
<span class="t" style="left:565.40px;top:323px;height:20px;line-height:20px;font-size:13px;color:#000;transform:scaleX(0.9883);-webkit-text-stroke:0.1px currentColor;">95</span>
<span class="t" style="left:623.40px;top:323px;height:20px;line-height:20px;font-size:13px;color:#000;transform:scaleX(0.9883);-webkit-text-stroke:0.1px currentColor;">17</span>
<span class="t" style="left:694.95px;top:323px;height:20px;line-height:20px;font-size:13px;color:#000;transform:scaleX(1.0490);-webkit-text-stroke:0.1px currentColor;">112</span>
<span class="r" style="left:0;top:0"><span class="t" style="left:28.70px;top:343px;height:20px;line-height:20px;font-size:13px;color:#000;transform:scaleX(0.9215);">FEDERACION</span> <span class="t" style="left:110.85px;top:343px;height:20px;line-height:20px;font-size:13px;color:#000;transform:scaleX(0.9283);">NICARAGÜENSE</span> <span class="t" style="left:211.03px;top:343px;height:20px;line-height:20px;font-size:13px;color:#000;transform:scaleX(0.8542);">DE</span> <span class="t" style="left:230.06px;top:343px;height:20px;line-height:20px;font-size:13px;color:#000;transform:scaleX(0.9062);">FUTBOL</span></span>
<span class="t" style="left:565.40px;top:343px;height:20px;line-height:20px;font-size:13px;color:#000;transform:scaleX(0.9883);-webkit-text-stroke:0.1px currentColor;">95</span>
<span class="t" style="left:623.40px;top:343px;height:20px;line-height:20px;font-size:13px;color:#000;transform:scaleX(0.9883);-webkit-text-stroke:0.1px currentColor;">47</span>
<span class="t" style="left:694.95px;top:343px;height:20px;line-height:20px;font-size:13px;color:#000;transform:scaleX(1.0022);-webkit-text-stroke:0.1px currentColor;">142</span>
<span class="r" style="left:0;top:0"><span class="t" style="left:28.70px;top:363px;height:20px;line-height:20px;font-size:13px;color:#000;transform:scaleX(0.9198);">FEDERACION</span> <span class="t" style="left:110.70px;top:363px;height:20px;line-height:20px;font-size:13px;color:#000;transform:scaleX(1.0333);">PANAMEÑA</span> <span class="t" style="left:188.70px;top:363px;height:20px;line-height:20px;font-size:13px;color:#000;transform:scaleX(0.8526);">DE</span> <span class="t" style="left:207.70px;top:363px;height:20px;line-height:20px;font-size:13px;color:#000;transform:scaleX(0.9045);">FUTBOL</span></span>
<span class="t" style="left:565.40px;top:363px;height:20px;line-height:20px;font-size:13px;color:#000;transform:scaleX(0.9883);-webkit-text-stroke:0.1px currentColor;">83</span>
<span class="t" style="left:623.40px;top:363px;height:20px;line-height:20px;font-size:13px;color:#000;transform:scaleX(0.9883);-webkit-text-stroke:0.1px currentColor;">22</span>
<span class="t" style="left:694.95px;top:363px;height:20px;line-height:20px;font-size:13px;color:#000;transform:scaleX(1.0022);-webkit-text-stroke:0.1px currentColor;">105</span>
<span class="r" style="left:0;top:0"><span class="t" style="left:28.70px;top:383px;height:20px;line-height:20px;font-size:13px;color:#000;transform:scaleX(0.9363);">FEDERATION</span> <span class="t" style="left:109.86px;top:383px;height:20px;line-height:20px;font-size:13px;color:#000;transform:scaleX(0.9594);">HAÏTIENNE</span> <span class="t" style="left:179.99px;top:383px;height:20px;line-height:20px;font-size:13px;color:#000;transform:scaleX(0.8543);">DE</span> <span class="t" style="left:199.03px;top:383px;height:20px;line-height:20px;font-size:13px;color:#000;transform:scaleX(0.9205);">FOOTBALL</span></span>
<span class="t" style="left:565.40px;top:383px;height:20px;line-height:20px;font-size:13px;color:#000;transform:scaleX(0.9883);-webkit-text-stroke:0.1px currentColor;">26</span>
<span class="t" style="left:630.85px;top:383px;height:20px;line-height:20px;font-size:13px;color:#000;transform:scaleX(0.9469);-webkit-text-stroke:0.1px currentColor;">2</span>
<span class="t" style="left:702.40px;top:383px;height:20px;line-height:20px;font-size:13px;color:#000;transform:scaleX(0.9883);-webkit-text-stroke:0.1px currentColor;">28</span>
<span class="r" style="left:0;top:0"><span class="t" style="left:28.70px;top:403px;height:20px;line-height:20px;font-size:13px;color:#000;transform:scaleX(0.9995);">JAMAICA</span> <span class="t" style="left:88.61px;top:403px;height:20px;line-height:20px;font-size:13px;color:#000;transform:scaleX(0.9173);">FOOTBALL</span> <span class="t" style="left:154.51px;top:403px;height:20px;line-height:20px;font-size:13px;color:#000;transform:scaleX(0.9331);">FEDERATION</span></span>
<span class="t" style="left:565.40px;top:403px;height:20px;line-height:20px;font-size:13px;color:#000;transform:scaleX(0.9883);-webkit-text-stroke:0.1px currentColor;">40</span>
<span class="t" style="left:630.85px;top:403px;height:20px;line-height:20px;font-size:13px;color:#000;transform:scaleX(0.9469);-webkit-text-stroke:0.1px currentColor;">4</span>
<span class="t" style="left:702.40px;top:403px;height:20px;line-height:20px;font-size:13px;color:#000;transform:scaleX(0.9883);-webkit-text-stroke:0.1px currentColor;">44</span>
<span class="r" style="left:0;top:0"><span class="t" style="left:28.70px;top:423px;height:20px;line-height:20px;font-size:13px;color:#000;transform:scaleX(1.0034);">CANADIAN</span> <span class="t" style="left:99.72px;top:423px;height:20px;line-height:20px;font-size:13px;color:#000;transform:scaleX(0.8523);">SOCCER</span> <span class="t" style="left:150.73px;top:423px;height:20px;line-height:20px;font-size:13px;color:#000;transform:scaleX(0.9605);">ASSOCIATION</span></span>
<span class="t" style="left:565.40px;top:423px;height:20px;line-height:20px;font-size:13px;color:#000;transform:scaleX(0.9883);-webkit-text-stroke:0.1px currentColor;">90</span>
<span class="t" style="left:623.40px;top:423px;height:20px;line-height:20px;font-size:13px;color:#000;transform:scaleX(0.9883);-webkit-text-stroke:0.1px currentColor;">17</span>
<span class="t" style="left:694.95px;top:423px;height:20px;line-height:20px;font-size:13px;color:#000;transform:scaleX(1.0022);-webkit-text-stroke:0.1px currentColor;">107</span>
<span class="r" style="left:0;top:0"><span class="t" style="left:28.70px;top:443px;height:20px;line-height:20px;font-size:13px;color:#000;transform:scaleX(0.9511);">SAINT</span> <span class="t" style="left:68.73px;top:443px;height:20px;line-height:20px;font-size:13px;color:#000;transform:scaleX(0.9540);">VINCENT</span> <span class="t" style="left:126.76px;top:443px;height:20px;line-height:20px;font-size:13px;color:#000;transform:scaleX(0.9987);">AND</span> <span class="t" style="left:157.78px;top:443px;height:20px;line-height:20px;font-size:13px;color:#000;transform:scaleX(0.8621);">THE</span> <span class="t" style="left:183.80px;top:443px;height:20px;line-height:20px;font-size:13px;color:#000;transform:scaleX(0.9242);">GRENADINES</span> <span class="t" style="left:266.86px;top:443px;height:20px;line-height:20px;font-size:13px;color:#000;transform:scaleX(0.9193);">FOOTBALL</span> <span class="t" style="left:332.90px;top:443px;height:20px;line-height:20px;font-size:13px;color:#000;transform:scaleX(0.9351);">FEDERATION</span></span>
<span class="t" style="left:565.40px;top:443px;height:20px;line-height:20px;font-size:13px;color:#000;transform:scaleX(0.9883);-webkit-text-stroke:0.1px currentColor;">22</span>
<span class="t" style="left:630.85px;top:443px;height:20px;line-height:20px;font-size:13px;color:#000;transform:scaleX(0.9469);-webkit-text-stroke:0.1px currentColor;">2</span>
<span class="t" style="left:702.40px;top:443px;height:20px;line-height:20px;font-size:13px;color:#000;transform:scaleX(0.9883);-webkit-text-stroke:0.1px currentColor;">24</span>
<span class="r" style="left:0;top:0"><span class="t" style="left:28.70px;top:463px;height:20px;line-height:20px;font-size:13px;color:#000;transform:scaleX(0.9760);">ANTIGUA</span> <span class="t" style="left:88.71px;top:463px;height:20px;line-height:20px;font-size:13px;color:#000;transform:scaleX(0.9982);">AND</span> <span class="t" style="left:119.71px;top:463px;height:20px;line-height:20px;font-size:13px;color:#000;transform:scaleX(0.9451);">BARBUDA</span> <span class="t" style="left:182.73px;top:463px;height:20px;line-height:20px;font-size:13px;color:#000;transform:scaleX(0.9189);">FOOTBALL</span> <span class="t" style="left:248.74px;top:463px;height:20px;line-height:20px;font-size:13px;color:#000;transform:scaleX(0.9604);">ASSOCIATION</span></span>
<span class="t" style="left:565.40px;top:463px;height:20px;line-height:20px;font-size:13px;color:#000;transform:scaleX(0.9883);-webkit-text-stroke:0.1px currentColor;">17</span>
<span class="t" style="left:630.85px;top:463px;height:20px;line-height:20px;font-size:13px;color:#000;transform:scaleX(0.9469);-webkit-text-stroke:0.1px currentColor;">3</span>
<span class="t" style="left:702.40px;top:463px;height:20px;line-height:20px;font-size:13px;color:#000;transform:scaleX(0.9883);-webkit-text-stroke:0.1px currentColor;">20</span>
<span class="r" style="left:0;top:0"><span class="t" style="left:28.70px;top:483px;height:20px;line-height:20px;font-size:13px;color:#000;transform:scaleX(0.9205);">FOOTBALL</span> <span class="t" style="left:94.83px;top:483px;height:20px;line-height:20px;font-size:13px;color:#000;transform:scaleX(0.9363);">FEDERATION</span> <span class="t" style="left:175.99px;top:483px;height:20px;line-height:20px;font-size:13px;color:#000;transform:scaleX(0.9098);">OF</span> <span class="t" style="left:196.02px;top:483px;height:20px;line-height:20px;font-size:13px;color:#000;transform:scaleX(0.8589);">BELIZE</span></span>
<span class="t" style="left:565.40px;top:483px;height:20px;line-height:20px;font-size:13px;color:#000;transform:scaleX(0.9883);-webkit-text-stroke:0.1px currentColor;">27</span>
<span class="t" style="left:630.85px;top:483px;height:20px;line-height:20px;font-size:13px;color:#000;transform:scaleX(0.9469);-webkit-text-stroke:0.1px currentColor;">9</span>
<span class="t" style="left:702.40px;top:483px;height:20px;line-height:20px;font-size:13px;color:#000;transform:scaleX(0.9883);-webkit-text-stroke:0.1px currentColor;">36</span>
<span class="r" style="left:0;top:0"><span class="t" style="left:28.70px;top:503px;height:20px;line-height:20px;font-size:13px;color:#000;transform:scaleX(0.9556);">ANGUILLA</span> <span class="t" style="left:93.76px;top:503px;height:20px;line-height:20px;font-size:13px;color:#000;transform:scaleX(0.9196);">FOOTBALL</span> <span class="t" style="left:159.82px;top:503px;height:20px;line-height:20px;font-size:13px;color:#000;transform:scaleX(0.9612);">ASSOCIATION</span></span>
<span class="t" style="left:565.40px;top:503px;height:20px;line-height:20px;font-size:13px;color:#000;transform:scaleX(0.9883);-webkit-text-stroke:0.1px currentColor;">17</span>
<span class="t" style="left:630.85px;top:503px;height:20px;line-height:20px;font-size:13px;color:#000;transform:scaleX(0.9469);-webkit-text-stroke:0.1px currentColor;">1</span>
<span class="t" style="left:702.40px;top:503px;height:20px;line-height:20px;font-size:13px;color:#000;transform:scaleX(0.9883);-webkit-text-stroke:0.1px currentColor;">18</span>
<span class="r" style="left:0;top:0"><span class="t" style="left:28.70px;top:523px;height:20px;line-height:20px;font-size:13px;color:#000;transform:scaleX(0.9341);">BARBADOS</span> <span class="t" style="left:99.80px;top:523px;height:20px;line-height:20px;font-size:13px;color:#000;transform:scaleX(0.9200);">FOOTBALL</span> <span class="t" style="left:165.89px;top:523px;height:20px;line-height:20px;font-size:13px;color:#000;transform:scaleX(0.9616);">ASSOCIATION</span></span>
<span class="t" style="left:565.40px;top:523px;height:20px;line-height:20px;font-size:13px;color:#000;transform:scaleX(0.9883);-webkit-text-stroke:0.1px currentColor;">76</span>
<span class="t" style="left:623.40px;top:523px;height:20px;line-height:20px;font-size:13px;color:#000;transform:scaleX(0.9883);-webkit-text-stroke:0.1px currentColor;">46</span>
<span class="t" style="left:694.95px;top:523px;height:20px;line-height:20px;font-size:13px;color:#000;transform:scaleX(1.0022);-webkit-text-stroke:0.1px currentColor;">122</span>
<span class="r" style="left:0;top:0"><span class="t" style="left:28.70px;top:543px;height:20px;line-height:20px;font-size:13px;color:#000;transform:scaleX(0.9614);">ASOCIACION</span> <span class="t" style="left:110.78px;top:543px;height:20px;line-height:20px;font-size:13px;color:#000;transform:scaleX(0.8535);">DE</span> <span class="t" style="left:129.80px;top:543px;height:20px;line-height:20px;font-size:13px;color:#000;transform:scaleX(0.9054);">FUTBOL</span> <span class="t" style="left:179.85px;top:543px;height:20px;line-height:20px;font-size:13px;color:#000;transform:scaleX(0.8535);">DE</span> <span class="t" style="left:198.87px;top:543px;height:20px;line-height:20px;font-size:13px;color:#000;transform:scaleX(0.9255);">CUBA</span></span>
<span class="t" style="left:565.40px;top:543px;height:20px;line-height:20px;font-size:13px;color:#000;transform:scaleX(0.9883);-webkit-text-stroke:0.1px currentColor;">17</span>
<span class="t" style="left:630.85px;top:543px;height:20px;line-height:20px;font-size:13px;color:#000;transform:scaleX(0.9469);-webkit-text-stroke:0.1px currentColor;">1</span>
<span class="t" style="left:702.40px;top:543px;height:20px;line-height:20px;font-size:13px;color:#000;transform:scaleX(0.9883);-webkit-text-stroke:0.1px currentColor;">18</span>
<span class="r" style="left:0;top:0"><span class="t" style="left:28.70px;top:563px;height:20px;line-height:20px;font-size:13px;color:#000;transform:scaleX(0.9569);">SURINAAMSE</span> <span class="t" style="left:114.56px;top:563px;height:20px;line-height:20px;font-size:13px;color:#000;transform:scaleX(0.9223);">VOETBAL</span> <span class="t" style="left:173.46px;top:563px;height:20px;line-height:20px;font-size:13px;color:#000;transform:scaleX(0.9674);">BOND</span></span>
<span class="t" style="left:565.40px;top:563px;height:20px;line-height:20px;font-size:13px;color:#000;transform:scaleX(0.9883);-webkit-text-stroke:0.1px currentColor;">40</span>
<span class="t" style="left:623.40px;top:563px;height:20px;line-height:20px;font-size:13px;color:#000;transform:scaleX(1.0593);-webkit-text-stroke:0.1px currentColor;">11</span>
<span class="t" style="left:702.40px;top:563px;height:20px;line-height:20px;font-size:13px;color:#000;transform:scaleX(0.9883);-webkit-text-stroke:0.1px currentColor;">51</span>
<span class="r" style="left:0;top:0"><span class="t" style="left:28.70px;top:583px;height:20px;line-height:20px;font-size:13px;color:#000;transform:scaleX(0.9133);">FEDERASHON</span> <span class="t" style="left:114.77px;top:583px;height:20px;line-height:20px;font-size:13px;color:#000;transform:scaleX(0.9053);">FUTBOL</span> <span class="t" style="left:164.81px;top:583px;height:20px;line-height:20px;font-size:13px;color:#000;transform:scaleX(0.9130);">KORSOU</span></span>
<span class="t" style="left:565.40px;top:583px;height:20px;line-height:20px;font-size:13px;color:#000;transform:scaleX(0.9883);-webkit-text-stroke:0.1px currentColor;">19</span>
<span class="t" style="left:630.85px;top:583px;height:20px;line-height:20px;font-size:13px;color:#000;transform:scaleX(0.9469);-webkit-text-stroke:0.1px currentColor;">3</span>
<span class="t" style="left:702.40px;top:583px;height:20px;line-height:20px;font-size:13px;color:#000;transform:scaleX(0.9883);-webkit-text-stroke:0.1px currentColor;">22</span>
<span class="r" style="left:0;top:0"><span class="t" style="left:28.70px;top:603px;height:20px;line-height:20px;font-size:13px;color:#000;transform:scaleX(0.9428);">ARUBAANSE</span> <span class="t" style="left:107.93px;top:603px;height:20px;line-height:20px;font-size:13px;color:#000;transform:scaleX(0.9265);">VOETBAL</span> <span class="t" style="left:167.09px;top:603px;height:20px;line-height:20px;font-size:13px;color:#000;transform:scaleX(0.9719);">BOND</span></span>
<span class="t" style="left:565.40px;top:603px;height:20px;line-height:20px;font-size:13px;color:#000;transform:scaleX(0.9883);-webkit-text-stroke:0.1px currentColor;">29</span>
<span class="t" style="left:630.85px;top:603px;height:20px;line-height:20px;font-size:13px;color:#000;transform:scaleX(0.9469);-webkit-text-stroke:0.1px currentColor;">4</span>
<span class="t" style="left:702.40px;top:603px;height:20px;line-height:20px;font-size:13px;color:#000;transform:scaleX(0.9883);-webkit-text-stroke:0.1px currentColor;">33</span>
<span class="r" style="left:0;top:0"><span class="t" style="left:28.70px;top:623px;height:20px;line-height:20px;font-size:13px;color:#000;transform:scaleX(0.9951);">BAHAMAS</span> <span class="t" style="left:95.56px;top:623px;height:20px;line-height:20px;font-size:13px;color:#000;transform:scaleX(0.9168);">FOOTBALL</span> <span class="t" style="left:161.43px;top:623px;height:20px;line-height:20px;font-size:13px;color:#000;transform:scaleX(0.9583);">ASSOCIATION</span></span>
<span class="t" style="left:565.40px;top:623px;height:20px;line-height:20px;font-size:13px;color:#000;transform:scaleX(0.9883);-webkit-text-stroke:0.1px currentColor;">13</span>
<span class="t" style="left:630.85px;top:623px;height:20px;line-height:20px;font-size:13px;color:#000;transform:scaleX(0.9469);-webkit-text-stroke:0.1px currentColor;">2</span>
<span class="t" style="left:702.40px;top:623px;height:20px;line-height:20px;font-size:13px;color:#000;transform:scaleX(0.9883);-webkit-text-stroke:0.1px currentColor;">15</span>
<span class="r" style="left:0;top:0"><span class="t" style="left:28.70px;top:643px;height:20px;line-height:20px;font-size:13px;color:#000;transform:scaleX(0.9584);">BERMUDA</span> <span class="t" style="left:94.61px;top:643px;height:20px;line-height:20px;font-size:13px;color:#000;transform:scaleX(0.9174);">FOOTBALL</span> <span class="t" style="left:160.52px;top:643px;height:20px;line-height:20px;font-size:13px;color:#000;transform:scaleX(0.9589);">ASSOCIATION</span></span>
<span class="t" style="left:565.40px;top:643px;height:20px;line-height:20px;font-size:13px;color:#000;transform:scaleX(0.9883);-webkit-text-stroke:0.1px currentColor;">16</span>
<span class="t" style="left:630.85px;top:643px;height:20px;line-height:20px;font-size:13px;color:#000;transform:scaleX(0.9469);-webkit-text-stroke:0.1px currentColor;">1</span>
<span class="t" style="left:702.40px;top:643px;height:20px;line-height:20px;font-size:13px;color:#000;transform:scaleX(0.9883);-webkit-text-stroke:0.1px currentColor;">17</span>
<span class="r" style="left:0;top:0"><span class="t" style="left:28.70px;top:663px;height:20px;line-height:20px;font-size:13px;color:#000;transform:scaleX(0.9132);">FEDERASHON</span> <span class="t" style="left:114.76px;top:663px;height:20px;line-height:20px;font-size:13px;color:#000;transform:scaleX(0.9052);">FUTBOL</span> <span class="t" style="left:164.80px;top:663px;height:20px;line-height:20px;font-size:13px;color:#000;transform:scaleX(0.9672);">BONERIANO</span></span>
<span class="t" style="left:572.85px;top:663px;height:20px;line-height:20px;font-size:13px;color:#000;transform:scaleX(0.9469);-webkit-text-stroke:0.1px currentColor;">4</span>
<span class="t" style="left:630.85px;top:663px;height:20px;line-height:20px;font-size:13px;color:#000;transform:scaleX(0.9469);-webkit-text-stroke:0.1px currentColor;">2</span>
<span class="t" style="left:709.85px;top:663px;height:20px;line-height:20px;font-size:13px;color:#000;transform:scaleX(0.9469);-webkit-text-stroke:0.1px currentColor;">6</span>
<span class="r" style="left:0;top:0"><span class="t" style="left:28.70px;top:683px;height:20px;line-height:20px;font-size:13px;color:#000;transform:scaleX(0.9047);">BRITISH</span> <span class="t" style="left:78.71px;top:683px;height:20px;line-height:20px;font-size:13px;color:#000;transform:scaleX(0.9690);">VIRGIN</span> <span class="t" style="left:125.72px;top:683px;height:20px;line-height:20px;font-size:13px;color:#000;transform:scaleX(0.9239);">ISLANDS</span> <span class="t" style="left:180.73px;top:683px;height:20px;line-height:20px;font-size:13px;color:#000;transform:scaleX(0.9189);">FOOTBALL</span> <span class="t" style="left:246.74px;top:683px;height:20px;line-height:20px;font-size:13px;color:#000;transform:scaleX(0.9604);">ASSOCIATION</span></span>
<span class="t" style="left:565.40px;top:683px;height:20px;line-height:20px;font-size:13px;color:#000;transform:scaleX(0.9883);-webkit-text-stroke:0.1px currentColor;">15</span>
<span class="t" style="left:623.40px;top:683px;height:20px;line-height:20px;font-size:13px;color:#000;transform:scaleX(0.9883);-webkit-text-stroke:0.1px currentColor;">12</span>
<span class="t" style="left:702.40px;top:683px;height:20px;line-height:20px;font-size:13px;color:#000;transform:scaleX(0.9883);-webkit-text-stroke:0.1px currentColor;">27</span>
<span class="r" style="left:0;top:0"><span class="t" style="left:28.70px;top:703px;height:20px;line-height:20px;font-size:13px;color:#000;transform:scaleX(1.0124);">CAYMAN</span> <span class="t" style="left:87.63px;top:703px;height:20px;line-height:20px;font-size:13px;color:#000;transform:scaleX(0.9227);">ISLANDS</span> <span class="t" style="left:142.57px;top:703px;height:20px;line-height:20px;font-size:13px;color:#000;transform:scaleX(0.9177);">FOOTBALL</span> <span class="t" style="left:208.50px;top:703px;height:20px;line-height:20px;font-size:13px;color:#000;transform:scaleX(0.9592);">ASSOCIATION</span></span>
<span class="t" style="left:565.40px;top:703px;height:20px;line-height:20px;font-size:13px;color:#000;transform:scaleX(0.9883);-webkit-text-stroke:0.1px currentColor;">12</span>
<span class="t" style="left:630.85px;top:703px;height:20px;line-height:20px;font-size:13px;color:#000;transform:scaleX(0.9469);-webkit-text-stroke:0.1px currentColor;">7</span>
<span class="t" style="left:702.40px;top:703px;height:20px;line-height:20px;font-size:13px;color:#000;transform:scaleX(0.9883);-webkit-text-stroke:0.1px currentColor;">19</span>
<span class="r" style="left:0;top:0"><span class="t" style="left:28.70px;top:723px;height:20px;line-height:20px;font-size:13px;color:#000;transform:scaleX(1.0197);">DOMINICA</span> <span class="t" style="left:98.57px;top:723px;height:20px;line-height:20px;font-size:13px;color:#000;transform:scaleX(0.9170);">FOOTBALL</span> <span class="t" style="left:164.45px;top:723px;height:20px;line-height:20px;font-size:13px;color:#000;transform:scaleX(0.9585);">ASSOCIATION</span></span>
<span class="t" style="left:565.40px;top:723px;height:20px;line-height:20px;font-size:13px;color:#000;transform:scaleX(0.9883);-webkit-text-stroke:0.1px currentColor;">13</span>
<span class="t" style="left:630.85px;top:723px;height:20px;line-height:20px;font-size:13px;color:#000;transform:scaleX(0.9469);-webkit-text-stroke:0.1px currentColor;">1</span>
<span class="t" style="left:702.40px;top:723px;height:20px;line-height:20px;font-size:13px;color:#000;transform:scaleX(0.9883);-webkit-text-stroke:0.1px currentColor;">14</span>
<span class="r" style="left:0;top:0"><span class="t" style="left:28.70px;top:743px;height:20px;line-height:20px;font-size:13px;color:#000;transform:scaleX(0.8830);">LIGUE</span> <span class="t" style="left:66.75px;top:743px;height:20px;line-height:20px;font-size:13px;color:#000;transform:scaleX(0.8539);">DE</span> <span class="t" style="left:85.78px;top:743px;height:20px;line-height:20px;font-size:13px;color:#000;transform:scaleX(0.9200);">FOOTBALL</span> <span class="t" style="left:151.87px;top:743px;height:20px;line-height:20px;font-size:13px;color:#000;transform:scaleX(0.8539);">DE</span> <span class="t" style="left:170.90px;top:743px;height:20px;line-height:20px;font-size:13px;color:#000;transform:scaleX(0.9066);">LA</span> <span class="t" style="left:188.93px;top:743px;height:20px;line-height:20px;font-size:13px;color:#000;transform:scaleX(0.9358);">GUYANE</span></span>
<span class="t" style="left:565.40px;top:743px;height:20px;line-height:20px;font-size:13px;color:#000;transform:scaleX(0.9883);-webkit-text-stroke:0.1px currentColor;">21</span>
<span class="t" style="left:630.85px;top:743px;height:20px;line-height:20px;font-size:13px;color:#000;transform:scaleX(0.9469);-webkit-text-stroke:0.1px currentColor;">1</span>
<span class="t" style="left:702.40px;top:743px;height:20px;line-height:20px;font-size:13px;color:#000;transform:scaleX(0.9883);-webkit-text-stroke:0.1px currentColor;">22</span>
<span class="r" style="left:0;top:0"><span class="t" style="left:28.70px;top:763px;height:20px;line-height:20px;font-size:13px;color:#000;transform:scaleX(1.0416);-webkit-text-stroke:0.1px currentColor;">Grenada</span> <span class="t" style="left:85.08px;top:763px;height:20px;line-height:20px;font-size:13px;color:#000;transform:scaleX(1.0730);-webkit-text-stroke:0.1px currentColor;">Football</span> <span class="t" style="left:138.38px;top:763px;height:20px;line-height:20px;font-size:13px;color:#000;transform:scaleX(1.0548);-webkit-text-stroke:0.1px currentColor;">Association</span></span>
<span class="t" style="left:565.40px;top:763px;height:20px;line-height:20px;font-size:13px;color:#000;transform:scaleX(0.9883);-webkit-text-stroke:0.1px currentColor;">20</span>
<span class="t" style="left:630.85px;top:763px;height:20px;line-height:20px;font-size:13px;color:#000;transform:scaleX(0.9469);-webkit-text-stroke:0.1px currentColor;">1</span>
<span class="t" style="left:702.40px;top:763px;height:20px;line-height:20px;font-size:13px;color:#000;transform:scaleX(0.9883);-webkit-text-stroke:0.1px currentColor;">21</span>
</div>
<div id="flist" style="left:812px;top:125px;width:386px;height:278px">
<div style="left:2px;top:-5px;width:13px;height:13px;background:#fff;border:1px solid #ababab;box-sizing:border-box;"></div>
<div style="left:2px;top:14px;width:13px;height:13px;background:#fff;border:1px solid #ababab;box-sizing:border-box;"></div>
<div style="left:2px;top:33px;width:13px;height:13px;background:#fff;border:1px solid #ababab;box-sizing:border-box;"></div>
<div style="left:2px;top:52px;width:13px;height:13px;background:#fff;border:1px solid #ababab;box-sizing:border-box;"></div>
<div style="left:2px;top:71px;width:13px;height:13px;background:#fff;border:1px solid #ababab;box-sizing:border-box;"></div>
<div style="left:2px;top:90px;width:13px;height:13px;background:#fff;border:1px solid #ababab;box-sizing:border-box;"></div>
<div style="left:2px;top:109px;width:13px;height:13px;background:#fff;border:1px solid #ababab;box-sizing:border-box;"></div>
<div style="left:2px;top:128px;width:13px;height:13px;background:#fff;border:1px solid #ababab;box-sizing:border-box;"></div>
<svg style="left:3px;top:129px" width="11" height="11" viewBox="0 0 11 11"><path d="M1.7 6.1L4.5 9.4L9.7 2.5" fill="none" stroke="#787878" stroke-width="1.6"/></svg>
<div style="left:2px;top:147px;width:13px;height:13px;background:#fff;border:1px solid #ababab;box-sizing:border-box;"></div>
<svg style="left:3px;top:148px" width="11" height="11" viewBox="0 0 11 11"><path d="M1.7 6.1L4.5 9.4L9.7 2.5" fill="none" stroke="#787878" stroke-width="1.6"/></svg>
<div style="left:2px;top:166px;width:13px;height:13px;background:#fff;border:1px solid #ababab;box-sizing:border-box;"></div>
<svg style="left:3px;top:167px" width="11" height="11" viewBox="0 0 11 11"><path d="M1.7 6.1L4.5 9.4L9.7 2.5" fill="none" stroke="#787878" stroke-width="1.6"/></svg>
<div style="left:2px;top:185px;width:13px;height:13px;background:#fff;border:1px solid #ababab;box-sizing:border-box;"></div>
<div style="left:2px;top:204px;width:13px;height:13px;background:#fff;border:1px solid #ababab;box-sizing:border-box;"></div>
<div style="left:2px;top:223px;width:13px;height:13px;background:#fff;border:1px solid #ababab;box-sizing:border-box;"></div>
<div style="left:2px;top:242px;width:13px;height:13px;background:#fff;border:1px solid #ababab;box-sizing:border-box;"></div>
<div style="left:2px;top:261px;width:13px;height:13px;background:#fff;border:1px solid #ababab;box-sizing:border-box;"></div>
<svg style="left:3px;top:262px" width="11" height="11" viewBox="0 0 11 11"><path d="M1.7 6.1L4.5 9.4L9.7 2.5" fill="none" stroke="#787878" stroke-width="1.6"/></svg>
<span class="t" style="left:20.60px;top:-8px;height:20px;line-height:20px;font-size:12.4px;color:#444;transform:scaleX(0.9800);">Name</span>
<span class="t" style="left:20.60px;top:11px;height:20px;line-height:20px;font-size:12.4px;color:#444;transform:scaleX(0.9553);">Short name</span>
<span class="t" style="left:20.60px;top:30px;height:20px;line-height:20px;font-size:12.4px;color:#444;transform:scaleX(0.9456);">Name (INT)</span>
<span class="t" style="left:20.60px;top:49px;height:20px;line-height:20px;font-size:12.4px;color:#444;transform:scaleX(0.9413);">Short name (INT)</span>
<span class="t" style="left:20.60px;top:68px;height:20px;line-height:20px;font-size:12.4px;color:#444;transform:scaleX(0.9527);">National ID</span>
<span class="t" style="left:20.60px;top:87px;height:20px;line-height:20px;font-size:12.4px;color:#444;transform:scaleX(0.9220);">Status</span>
<span class="t" style="left:20.60px;top:106px;height:20px;line-height:20px;font-size:12.4px;color:#444;transform:scaleX(0.9537);">Parent id</span>
<span class="t" style="left:20.60px;top:125px;height:20px;line-height:20px;font-size:12.4px;color:#333;font-weight:bold;transform:scaleX(0.9440);">Parent organization</span>
<span class="t" style="left:20.60px;top:144px;height:20px;line-height:20px;font-size:12.4px;color:#333;font-weight:bold;transform:scaleX(0.9362);">Organization Category</span>
<span class="t" style="left:20.60px;top:163px;height:20px;line-height:20px;font-size:12.4px;color:#333;font-weight:bold;transform:scaleX(0.9714);">Type</span>
<span class="t" style="left:20.60px;top:182px;height:20px;line-height:20px;font-size:12.4px;color:#444;transform:scaleX(0.9575);">Notes</span>
<span class="t" style="left:20.60px;top:201px;height:20px;line-height:20px;font-size:12.4px;color:#444;transform:scaleX(0.9883);">Date of foundation</span>
<span class="t" style="left:20.60px;top:220px;height:20px;line-height:20px;font-size:12.4px;color:#444;transform:scaleX(0.9259);">Address</span>
<span class="t" style="left:20.60px;top:239px;height:20px;line-height:20px;font-size:12.4px;color:#444;transform:scaleX(0.8661);">ZIP</span>
<span class="t" style="left:20.60px;top:258px;height:20px;line-height:20px;font-size:12.4px;color:#333;font-weight:bold;transform:scaleX(0.9015);">Place</span>
</div>
<span class="r" style="left:0;top:0"><span class="t" style="left:813.00px;top:14px;height:30px;line-height:30px;font-size:22.5px;color:#217346;transform:scaleX(0.9151);-webkit-text-stroke:0.55px #e6e6e6;">PivotTable</span> <span class="t" style="left:915.30px;top:14px;height:30px;line-height:30px;font-size:22.5px;color:#217346;transform:scaleX(0.8596);-webkit-text-stroke:0.55px #e6e6e6;">Fields</span></span>
<span class="t" style="left:813.60px;top:53px;height:20px;line-height:20px;font-size:12.4px;color:#444;transform:scaleX(0.9584);">Choose fields to add to report:</span>
<span class="t" style="left:814.00px;top:88px;height:20px;line-height:20px;font-size:12.4px;color:#6a6a6a;transform:scaleX(0.8812);">Search</span>
<span class="t" style="left:816.40px;top:422px;height:20px;line-height:20px;font-size:12.4px;color:#444;transform:scaleX(0.9442);">Drag fields between areas below:</span>
<span class="t" style="left:838.50px;top:455px;height:20px;line-height:20px;font-size:12.4px;color:#444;transform:scaleX(0.7935);">FILTERS</span>
<span class="t" style="left:1040.70px;top:455px;height:20px;line-height:20px;font-size:12.4px;color:#444;transform:scaleX(0.9085);">COLUMNS</span>
<span class="t" style="left:838.50px;top:609px;height:20px;line-height:20px;font-size:12.4px;color:#444;transform:scaleX(0.8483);">ROWS</span>
<span class="t" style="left:1040.20px;top:609px;height:20px;line-height:20px;font-size:12.4px;color:#444;transform:scaleX(0.8607);">VALUES</span>
<span class="t" style="left:823.20px;top:479px;height:19px;line-height:19px;font-size:12.4px;color:#444;transform:scaleX(0.9228);">Type</span>
<span class="t" style="left:823.20px;top:500px;height:19px;line-height:19px;font-size:12.4px;color:#444;transform:scaleX(0.9097);">Place</span>
<span class="t" style="left:1024.90px;top:479px;height:19px;line-height:19px;font-size:12.4px;color:#444;transform:scaleX(0.9606);">Organization Category</span>
<span class="t" style="left:823.20px;top:633px;height:19px;line-height:19px;font-size:12.4px;color:#444;transform:scaleX(0.9547);">Parent organization</span>
<span class="t" style="left:1024.90px;top:633px;height:19px;line-height:19px;font-size:12.4px;color:#444;transform:scaleX(0.9946);">Count</span>
<span class="t" style="left:834.00px;top:773px;height:20px;line-height:20px;font-size:12.4px;color:#444;transform:scaleX(0.9428);">Defer Layout Update</span>
<span class="t" style="left:1167.30px;top:773px;height:20px;line-height:20px;font-size:12.4px;color:#b4b4b4;transform:scaleX(0.8654);">UPDATE</span>
<span class="t" style="left:1022.60px;top:607.5px;height:20px;line-height:20px;font-size:15px;color:#7c7c7c;transform:scaleX(1.0991);font-family:'Liberation Serif',serif;">Σ</span>
<span class="t" style="left:114.70px;top:780px;height:20px;line-height:20px;font-size:13.3px;color:#444;transform:scaleX(0.9255);">Data</span>
<span class="t" style="left:166.50px;top:780px;height:20px;line-height:20px;font-size:13.3px;color:#217346;font-weight:bold;transform:scaleX(0.9626);">Pivot</span>
<span class="t" style="left:223.10px;top:780px;height:20px;line-height:20px;font-size:13.3px;color:#444;transform:scaleX(0.9544);">Parameters</span>
<svg style="left:0;top:0;z-index:50" width="1226" height="802" viewBox="0 0 1226 802"><rect x="806.8" y="212.7" width="70.7" height="18.5" fill="none" stroke="#e8152a" stroke-width="3"/><path d="M1026.5 504.8L887 247" fill="none" stroke="#ed1c24" stroke-width="3"/><path d="M884.6 260.8L886.6 246.8L900.6 253.4" fill="none" stroke="#ed1c24" stroke-width="3" stroke-linejoin="round"/></svg>
</div></body></html>
